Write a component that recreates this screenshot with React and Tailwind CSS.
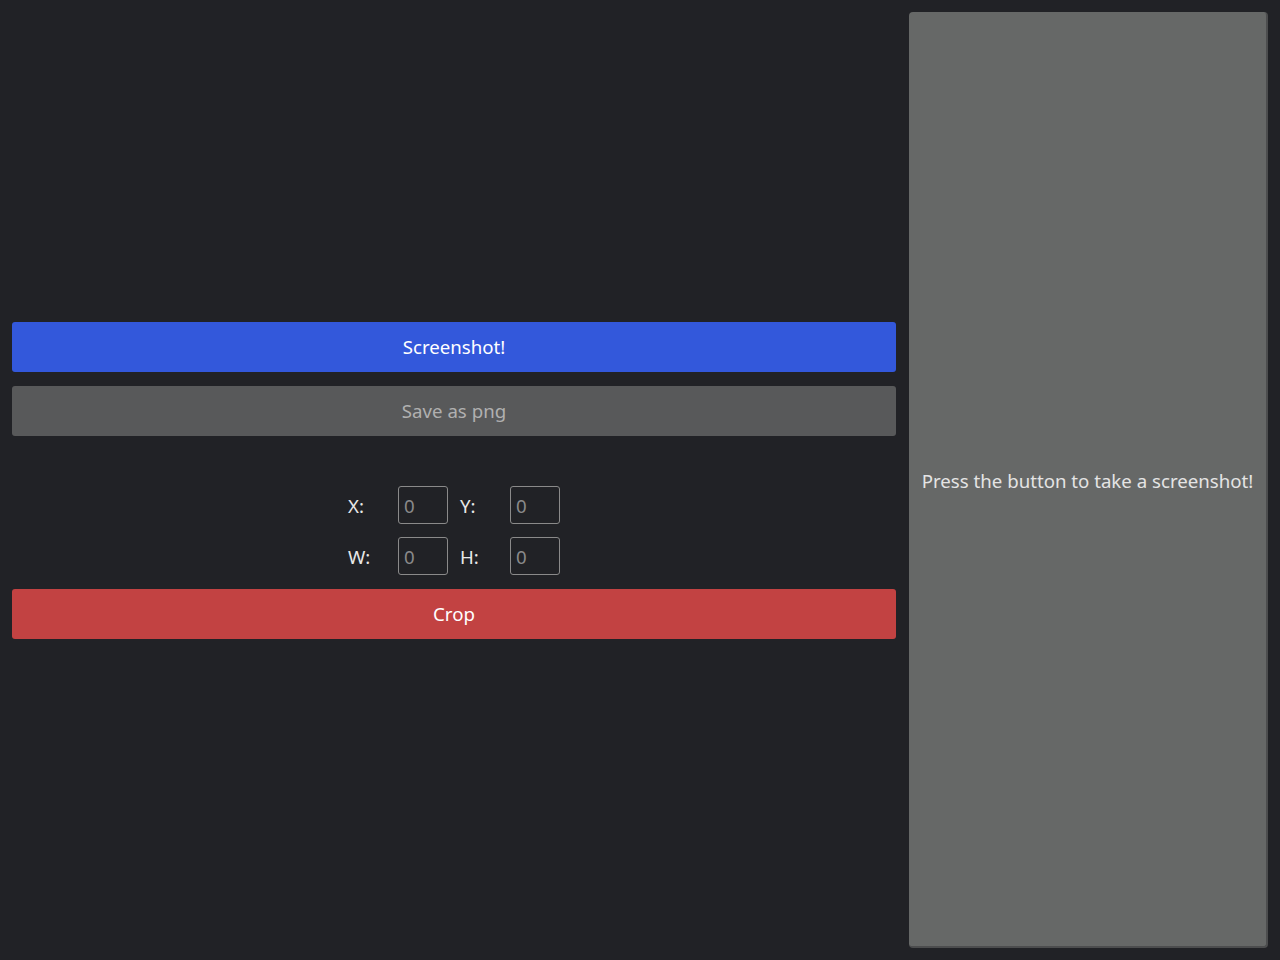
import React, { useState } from "react";

const Field = ({ label, value, onChange }) => (
  <>
    <label className="pt-1 text-[18.67px] text-[#e8e8e8] leading-none">{label}</label>
    <input
      type="text"
      value={value}
      onChange={(e) => onChange(e.target.value)}
      placeholder="0"
      className="w-[50px] h-[38px] px-[5px] pt-[2px] bg-transparent border border-[#8a8a8a] rounded-[3px] text-[18.67px] text-[#e8e8e8] placeholder:text-[#8a8a8a] outline-none"
    />
  </>
);

const App = () => {
  const [crop, setCrop] = useState({ x: "", y: "", w: "", h: "" });
  const set = (k) => (v) => setCrop((c) => ({ ...c, [k]: v }));

  return (
    <div
      className="h-screen bg-[#212226] p-3 flex gap-[13px]"
      style={{ fontFamily: '"Noto Sans", "Open Sans", sans-serif' }}
    >
      <div className="flex-1 flex flex-col justify-center gap-[14px]">
        <button className="h-[50px] rounded-[3px] bg-[#3358db] text-white text-[18.67px]">
          Screenshot!
        </button>
        <button
          disabled
          className="h-[50px] rounded-[3px] bg-[#58595a] text-[#b0b0b0] text-[18.67px]"
        >
          Save as png
        </button>
        <div className="mt-[36px] flex justify-center">
          <div className="grid grid-cols-[38px_50px_38px_50px] gap-x-3 gap-y-[13px] items-center">
            <Field label="X:" value={crop.x} onChange={set("x")} />
            <Field label="Y:" value={crop.y} onChange={set("y")} />
            <Field label="W:" value={crop.w} onChange={set("w")} />
            <Field label="H:" value={crop.h} onChange={set("h")} />
          </div>
        </div>
        <button className="h-[50px] rounded-[3px] bg-[#c24242] text-white text-[18.67px]">
          Crop
        </button>
      </div>
      <div className="w-[359px] rounded-[4px] bg-[#666867] border-r-2 border-b-2 border-[#4c4d4e] flex items-center justify-center">
        <p className="mt-1 text-[18.67px] text-[#e4e4e4]">Press the button to take a screenshot!</p>
      </div>
    </div>
  );
};

export default App;
